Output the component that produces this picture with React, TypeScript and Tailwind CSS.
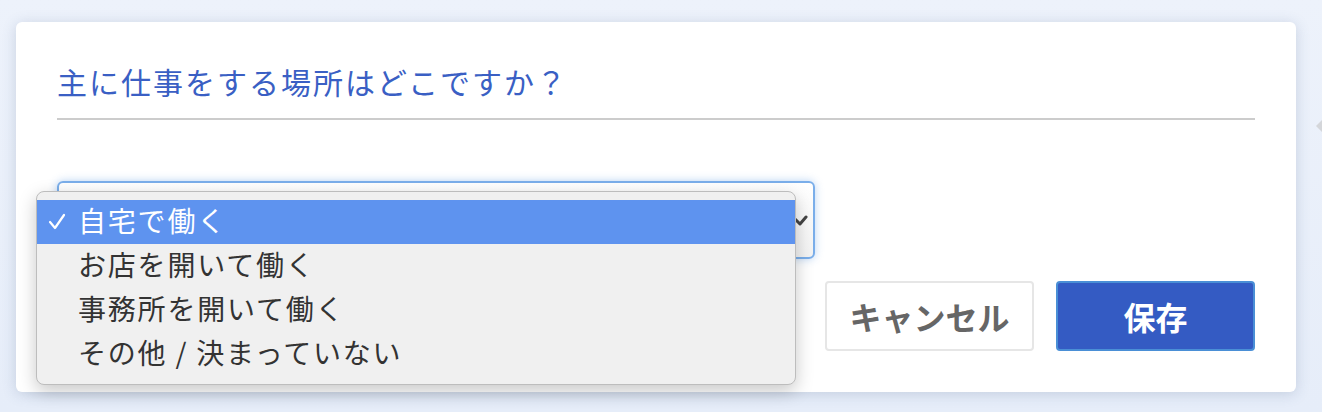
import React from "react";

const jp = { fontFamily: '"Noto Sans CJK JP", "Noto Sans", sans-serif' };

const options = ["自宅で働く", "お店を開いて働く", "事務所を開いて働く", "その他 / 決まっていない"];

function WorkplaceMenu() {
  return (
    <div className="absolute left-[-23px] top-[8px] z-10 w-[760px] rounded-[8px] border border-[#bdbdbd] bg-[#f0f0f0] pt-[8px] pb-[8px] shadow-[0_6px_18px_rgba(0,0,0,0.22)]">
      {options.map((label, i) => (
        <div
          key={label}
          className={`relative flex h-[44px] items-center pb-[5px] pl-[41px] text-[28px] tracking-[1.8px] ${
            i === 0 ? "bg-[#5e93ef] text-white" : "text-[#333333]"
          }`}
        >
          {i === 0 && (
            <svg className="absolute left-[11px] top-[13px]" width="18" height="17" viewBox="0 0 18 17" fill="none">
              <path d="M2 9l5 6L16 2" stroke="white" strokeWidth="2.2" strokeLinecap="round" strokeLinejoin="round" />
            </svg>
          )}
          {label}
        </div>
      ))}
    </div>
  );
}

export default function App() {
  return (
    <div className="relative h-[412px] w-[1322px] overflow-hidden bg-gradient-to-b from-[#edf2fb] to-[#e6edf9] pt-[22px] pl-[16px]" style={jp}>
      <div className="w-[1280px] rounded-[6px] bg-white px-[41px] pt-[41px] pb-[41px] shadow-[0_2px_14px_rgba(70,90,130,0.22)]">
        <h1 className="h-[37px] text-[30px] leading-[37px] tracking-[2px] text-[#3a5fc4]">主に仕事をする場所はどこですか？</h1>
        <div className="mt-[18px] h-[2px] bg-[#cccccc]" />
        <div className="relative mt-[61px] h-[78px] w-[758px] rounded-[6px] border-2 border-[#7aaeea] bg-gradient-to-b from-white to-[#f3f3f3] shadow-[0_0_8px_rgba(100,160,230,0.45)]">
          <svg className="absolute right-[5px] top-[31px]" width="16" height="14" viewBox="0 0 16 14" fill="none">
            <path d="M2 4l6 6 6-7" stroke="#444444" strokeWidth="3" strokeLinecap="round" strokeLinejoin="round" />
          </svg>
          <WorkplaceMenu />
        </div>
        <div className="mt-[22px] flex justify-end gap-[22px]">
          <button className="h-[70px] w-[209px] rounded-[4px] border-2 border-[#e6e6e6] bg-white text-[32px] font-bold text-[#666666]">
            キャンセル
          </button>
          <button className="h-[70px] w-[199px] rounded-[4px] border-2 border-[#4a8fd6] bg-[#345bc3] text-[32px] font-bold text-white">
            保存
          </button>
        </div>
      </div>
      <div className="absolute left-[1316px] top-[118px] h-0 w-0 border-y-[8px] border-r-[8px] border-y-transparent border-r-[#d4d6da]" />
    </div>
  );
}
